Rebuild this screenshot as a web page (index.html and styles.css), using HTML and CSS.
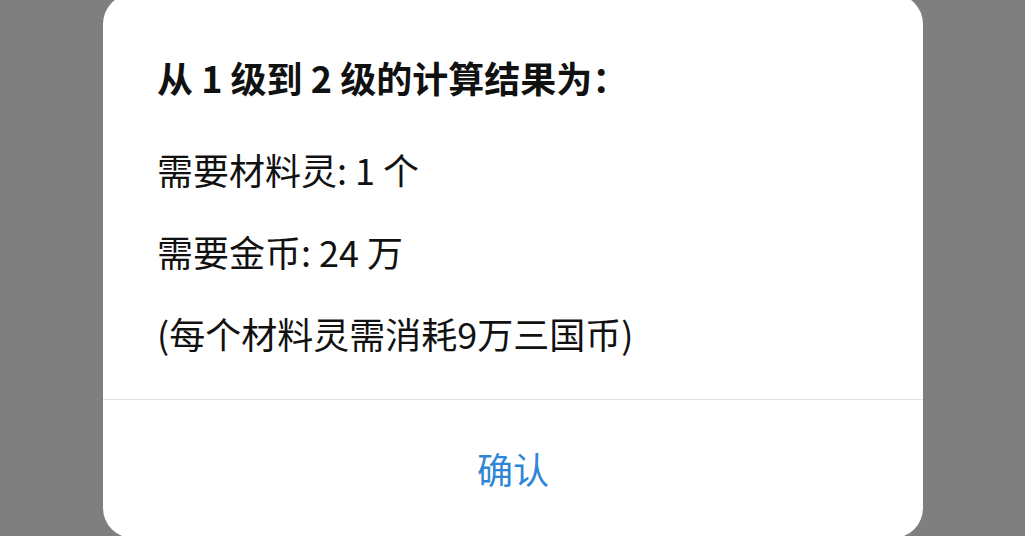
FILE: index.html
```html
<!DOCTYPE html>
<html lang="zh-CN">
<head>
<meta charset="utf-8">
<title>计算结果</title>
<link rel="stylesheet" href="styles.css">
</head>
<body>
<div class="overlay">
  <div class="dialog">
    <div class="content">
      <div class="title">从 1 级到 2 级的计算结果为：</div>
      <div class="line first">需要材料灵: 1 个</div>
      <div class="line">需要金币: 24 万</div>
      <div class="line">(每个材料灵需消耗9万三国币)</div>
    </div>
    <div class="actions">
      <button class="confirm">确认</button>
    </div>
  </div>
</div>
</body>
</html>
```

FILE: styles.css
```css
html, body {
  margin: 0;
  padding: 0;
  height: 100%;
  overflow: hidden;
}
body {
  background: #7f7f7f;
  font-family: "Noto Sans CJK SC", "Noto Sans", sans-serif;
}
.overlay {
  display: flex;
  justify-content: flex-start;
  padding-left: 103px;
}
.dialog {
  width: 820px;
  height: 544px;
  margin-top: -6px;
  background: #ffffff;
  border-radius: 30px;
  display: flex;
  flex-direction: column;
}
.content {
  padding: 57px 54px 40px 54px;
  display: flex;
  flex-direction: column;
  border-bottom: 1px solid #e3e3e3;
}
.title {
  font-size: 36px;
  line-height: 52px;
  font-weight: 700;
  color: #111111;
}
.line {
  font-size: 36px;
  line-height: 52px;
  color: #111111;
  margin-top: 30px;
}
.line.first {
  margin-top: 40px;
}
.actions {
  flex: 1;
  display: flex;
  align-items: center;
  justify-content: center;
}
.confirm {
  border: none;
  background: none;
  padding: 0;
  font-family: "Noto Sans CJK SC", "Noto Sans", sans-serif;
  font-size: 36px;
  line-height: 52px;
  color: #2f86d6;
  margin-top: -2px;
}
```
